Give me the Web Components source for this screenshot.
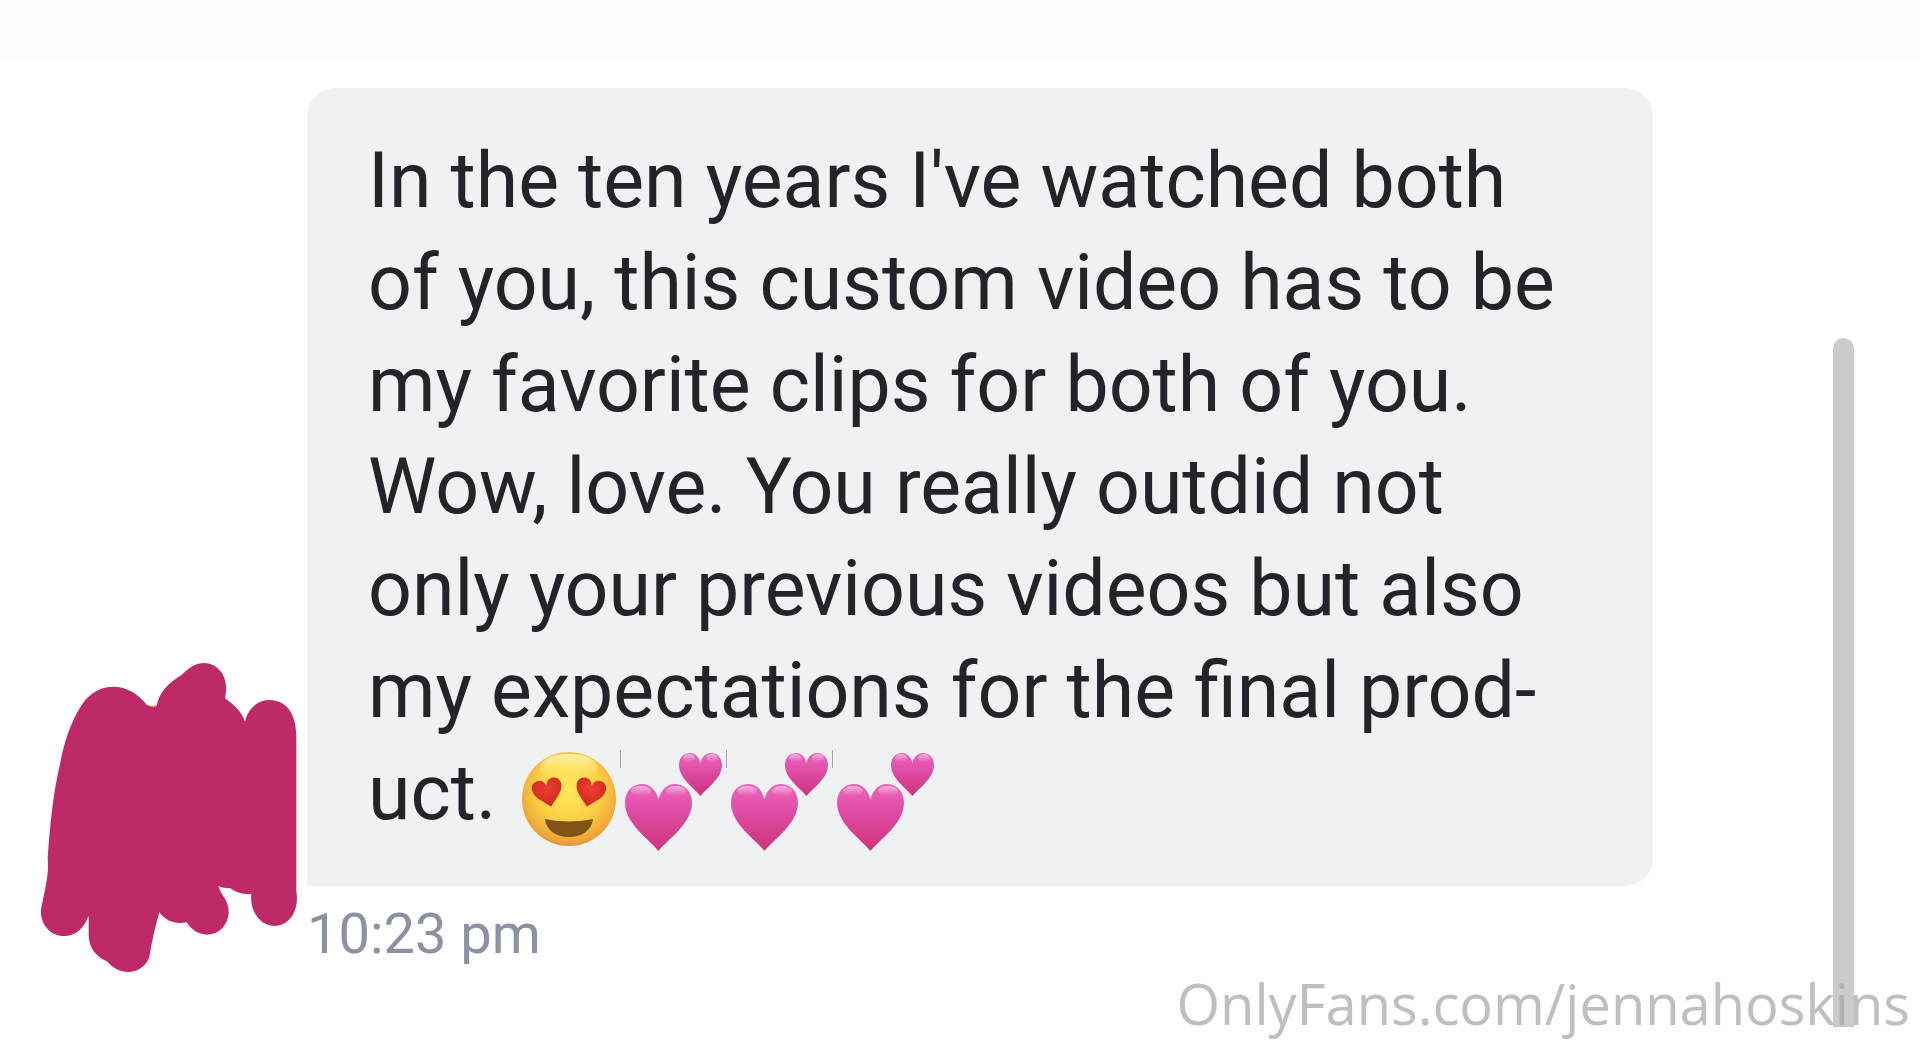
<!DOCTYPE html>
<html lang="en">
<head>
<meta charset="UTF-8">
<meta name="viewport" content="width=device-width, initial-scale=1">
<title>Messages</title>
<style>
    body {
        margin: 0;
        background: #fefefe;
        font-family: Roboto, "Liberation Sans", sans-serif;
    }
</style>
</head>
<body>
<chat-view>
    <chat-message time="10:23 pm">
        <scribble-avatar slot="avatar"></scribble-avatar>
        In the ten years I've watched both<br>
        of you, this custom video has to be<br>
        my favorite clips for both of you.<br>
        Wow, love. You really outdid not<br>
        only your previous videos but also<br>
        my expectations for the final prod-<br>
        uct. <emoji-icon name="heart-eyes"></emoji-icon><emoji-icon name="two-hearts"></emoji-icon><emoji-icon name="two-hearts"></emoji-icon><emoji-icon name="two-hearts"></emoji-icon>
    </chat-message>
    <scroll-thumb slot="scroll"></scroll-thumb>
    <page-watermark slot="watermark">OnlyFans.com/jennahoskins</page-watermark>
</chat-view>

<script>
class ChatView extends HTMLElement {
    constructor() {
        super();
        this.attachShadow({ mode: 'open' });
        this.shadowRoot.innerHTML = `
            <style>
                :host {
                    display: flex;
                    flex-direction: column;
                    position: relative;
                    min-height: 100vh;
                    overflow: hidden;
                }
                header {
                    height: 59px;
                    background: #fcfcfc;
                }
                main {
                    flex: 1;
                    padding: 29px 267px 0 0;
                }
            </style>
            <header></header>
            <main><slot></slot></main>
            <slot name="scroll"></slot>
            <slot name="watermark"></slot>
        `;
    }
}

class ChatMessage extends HTMLElement {
    constructor() {
        super();
        this.attachShadow({ mode: 'open' });
        this.shadowRoot.innerHTML = `
            <style>
                :host {
                    display: grid;
                    grid-template-columns: 307px 1fr;
                }
                .avatar {
                    grid-row: 1 / 3;
                    align-self: end;
                }
                .bubble {
                    margin: 0;
                    padding: 42px 61px;
                    border-radius: 28px 28px 28px 0;
                    background: #f0f1f3;
                    color: #222429;
                    font-size: 77px;
                    line-height: 102px;
                    white-space: nowrap;
                }
                time {
                    padding: 16px 0 32px;
                    color: #8b92a3;
                    font-size: 56px;
                    line-height: 64px;
                }
            </style>
            <div class="avatar"><slot name="avatar"></slot></div>
            <p class="bubble"><slot></slot></p>
            <time></time>
        `;
    }

    connectedCallback() {
        this.shadowRoot.querySelector('time').textContent = this.getAttribute('time');
    }
}

class ScribbleAvatar extends HTMLElement {
    constructor() {
        super();
        this.attachShadow({ mode: 'open' });
        this.shadowRoot.innerHTML = `
            <style>
                :host { display: block; }
                svg { display: block; width: 307px; height: 357px; }
            </style>
            <svg viewBox="0 0 921 1071" aria-hidden="true">
                <path d="M440 193h32v12h-32z" fill="#e5a36a"/>
                <path fill="#be2a68" d="M123 805 C135 745 148 700 143 650 C150 560 158 460 180 370 C195 285 225 215 258 175 C305 123 385 120 442 193 Q456 202 470 196 C476 155 505 125 545 102 C570 76 590 66 612 66 C655 67 690 107 675 172 C705 194 725 212 735 242 C745 200 775 177 808 177 C850 177 875 205 883 240 Q889 262 889 295 V750 C899 812 866 855 823 855 C780 855 748 810 754 758 C735 762 710 756 690 741 Q670 743 655 736 Q662 755 673 770 C705 818 675 881 621 881 C594 881 572 864 560 844 C530 851 498 842 478 814 C465 860 455 905 448 948 C430 1000 360 1010 321 961 C285 946 266 918 266 880 V824 C250 865 225 885 192 885 C148 884 120 847 123 805Z"/>
            </svg>
        `;
    }
}

const HEART = 'M50 100 C38 84 0 60 0 28 C0 10 12 0 26 0 C38 0 47 10 50 23 C53 10 62 0 74 0 C88 0 100 10 100 28 C100 60 62 84 50 100Z';

const EMOJI = {
    'heart-eyes': {
        label: 'smiling face with heart eyes',
        art: `
            <defs>
                <radialGradient id="skin" cx=".5" cy=".4" r=".62">
                    <stop offset="0" stop-color="#ffe95c"/>
                    <stop offset=".55" stop-color="#fbd044"/>
                    <stop offset=".88" stop-color="#eea63a"/>
                    <stop offset="1" stop-color="#dd9034"/>
                </radialGradient>
                <linearGradient id="shine" x2="0" y2="1">
                    <stop offset="0" stop-color="#fff6bd" stop-opacity=".9"/>
                    <stop offset="1" stop-color="#ffe95c" stop-opacity="0"/>
                </linearGradient>
                <radialGradient id="eye" cx=".5" cy=".35" r=".7">
                    <stop offset="0" stop-color="#f0402f"/>
                    <stop offset="1" stop-color="#c9241f"/>
                </radialGradient>
            </defs>
            <circle cx="49" cy="54" r="47" fill="url(#skin)"/>
            <ellipse cx="49" cy="23" rx="29" ry="14" fill="url(#shine)"/>
            <path d="${HEART}" fill="url(#eye)" transform="translate(13 34) rotate(-13 15 14) scale(.3 .28)"/>
            <path d="${HEART}" fill="url(#eye)" transform="translate(55 34) rotate(13 15 14) scale(.3 .28)"/>
            <path d="M25 74 Q49 79 73 74 C72 85 62 92 49 92 C36 92 26 85 25 74Z" fill="#805317"/>
        `
    },
    'two-hearts': {
        label: 'two hearts',
        art: `
            <defs>
                <linearGradient id="pink" x2="0" y2="1">
                    <stop offset="0" stop-color="#ec65be"/>
                    <stop offset=".5" stop-color="#dc48a0"/>
                    <stop offset="1" stop-color="#cb3478"/>
                </linearGradient>
                <linearGradient id="gloss" x2="0" y2="1">
                    <stop offset="0" stop-color="#fff" stop-opacity=".5"/>
                    <stop offset="1" stop-color="#fff" stop-opacity="0"/>
                </linearGradient>
            </defs>
            <path d="M.5 5V23" stroke="#b3a0b3"/>
            <path d="${HEART}" fill="url(#pink)" transform="translate(5 39) scale(.67)"/>
            <ellipse cx="21" cy="46" rx="10" ry="5" fill="url(#gloss)"/>
            <ellipse cx="56" cy="46" rx="10" ry="5" fill="url(#gloss)"/>
            <path d="${HEART}" fill="url(#pink)" transform="translate(59 8) scale(.43)"/>
            <ellipse cx="69" cy="13" rx="6" ry="4" fill="url(#gloss)"/>
            <ellipse cx="92" cy="13" rx="6" ry="4" fill="url(#gloss)"/>
        `
    }
};

class EmojiIcon extends HTMLElement {
    constructor() {
        super();
        this.attachShadow({ mode: 'open' });
    }

    connectedCallback() {
        const emoji = EMOJI[this.getAttribute('name')];
        this.shadowRoot.innerHTML = `
            <style>
                :host {
                    display: inline-block;
                    box-sizing: border-box;
                    width: 106px;
                    height: 102px;
                    padding-top: 3px;
                    vertical-align: bottom;
                }
                :host([name="heart-eyes"]) {
                    width: 100px;
                    margin-left: 5px;
                }
                svg { display: block; width: 100%; height: 99px; overflow: visible; }
            </style>
            <svg role="img" aria-label="${emoji.label}">${emoji.art}</svg>
        `;
    }
}

class ScrollThumb extends HTMLElement {
    constructor() {
        super();
        this.attachShadow({ mode: 'open' });
        // lies over the conversation, along the right edge
        this.shadowRoot.innerHTML = `
            <style>
                :host {
                    position: absolute;
                    top: 338px;
                    right: 66px;
                    bottom: 22px;
                    width: 21px;
                    border-radius: 11px 11px 0 0;
                    background: #cbcbcb;
                }
            </style>
        `;
    }
}

class PageWatermark extends HTMLElement {
    constructor() {
        super();
        this.attachShadow({ mode: 'open' });
        this.shadowRoot.innerHTML = `
            <style>
                :host {
                    position: absolute;
                    right: 10px;
                    bottom: 10px;
                    color: rgba(170, 170, 170, .75);
                    font-family: "Open Sans", "Noto Sans", sans-serif;
                    font-size: 56px;
                    line-height: 72px;
                    white-space: nowrap;
                }
            </style>
            <slot></slot>
        `;
    }
}

customElements.define('chat-view', ChatView);
customElements.define('chat-message', ChatMessage);
customElements.define('scribble-avatar', ScribbleAvatar);
customElements.define('emoji-icon', EmojiIcon);
customElements.define('scroll-thumb', ScrollThumb);
customElements.define('page-watermark', PageWatermark);
</script>
</body>
</html>
